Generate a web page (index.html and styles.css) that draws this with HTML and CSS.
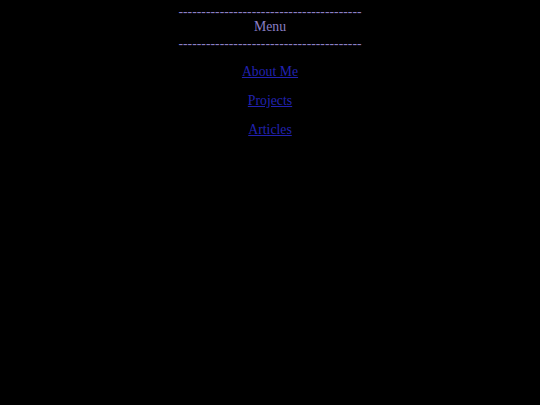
FILE: index.html
```html
<!DOCTYPE html>
<html>
<head>
<meta charset="utf-8">
<link rel="stylesheet" href="styles.css">
</head>
<body>
<div class="menu">
  <div class="dash">----------------------------------------</div>
  <div class="title">Menu</div>
  <div class="dash">----------------------------------------</div>
  <ul class="links">
    <li><a href="#">About Me</a></li>
    <li><a href="#">Projects</a></li>
    <li><a href="#">Articles</a></li>
  </ul>
</div>
</body>
</html>
```
FILE: styles.css
```css
html, body {
  margin: 0;
  padding: 0;
  background: #000;
}
body {
  font-family: "Liberation Serif", serif;
  font-size: 13.75px;
  color: #8a7fc4;
}
.menu {
  display: flex;
  flex-direction: column;
  align-items: center;
  padding-top: 4px;
}
.dash {
  line-height: 16px;
}
.title {
  line-height: 16px;
  margin: -1px 0 1px;
}
.links {
  list-style: none;
  margin: 11px 0 0;
  padding: 0;
  display: flex;
  flex-direction: column;
  align-items: center;
  gap: 11px;
}
.links li {
  line-height: 18px;
}
.links a {
  color: #2222b0;
}
```
